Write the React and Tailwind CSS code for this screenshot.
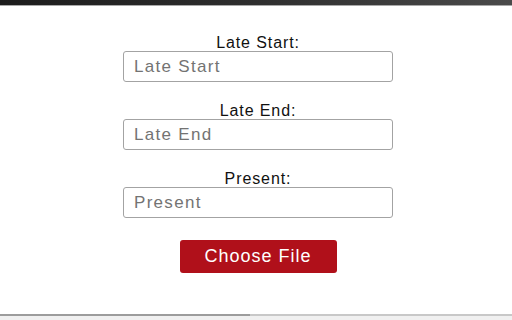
import { useState } from "react";

const fields = [
  { id: "lateStart", label: "Late Start:", placeholder: "Late Start" },
  { id: "lateEnd", label: "Late End:", placeholder: "Late End" },
  { id: "present", label: "Present:", placeholder: "Present" },
];

export default function App() {
  const [values, setValues] = useState({ lateStart: "", lateEnd: "", present: "" });

  return (
    <div
      className="h-screen flex flex-col bg-white text-[#111]"
      style={{ fontFamily: '"Liberation Sans", Arial, sans-serif' }}
    >
      {/* window chrome strip */}
      <div className="h-[5px] bg-gradient-to-r from-[#1c1c1c] via-[#2e2e2e] to-[#4a4a4a]" />
      <div className="h-px bg-[#a8a8a8]" />

      <main className="flex-1 flex flex-col items-center pt-[29px] pl-1">
        {fields.map((f) => (
          <div key={f.id} className="flex flex-col items-center mb-[21px]">
            <label
              htmlFor={f.id}
              className="text-[16px] leading-4 tracking-[0.9px]"
            >
              {f.label}
            </label>
            <input
              id={f.id}
              type="text"
              placeholder={f.placeholder}
              value={values[f.id]}
              onChange={(e) => setValues({ ...values, [f.id]: e.target.value })}
              className="w-[270px] h-[31px] border border-[#a3a3a3] rounded-[3px] pl-[10px] text-[17px] tracking-[1.3px] placeholder:text-[#737373] focus:outline-none"
            />
          </div>
        ))}

        <button className="mt-[1px] w-[157px] h-[33px] rounded-[3px] bg-[#b0101a] text-white text-[18px] tracking-[1px]">
          Choose File
        </button>
      </main>

      {/* bottom edge */}
      <div className="flex h-[2px]">
        <div className="w-[250px] bg-[#9c9c9c]" />
        <div className="flex-1 bg-[#c8c8c8]" />
      </div>
      <div className="h-1 bg-[#f0f0f0]" />
    </div>
  );
}
